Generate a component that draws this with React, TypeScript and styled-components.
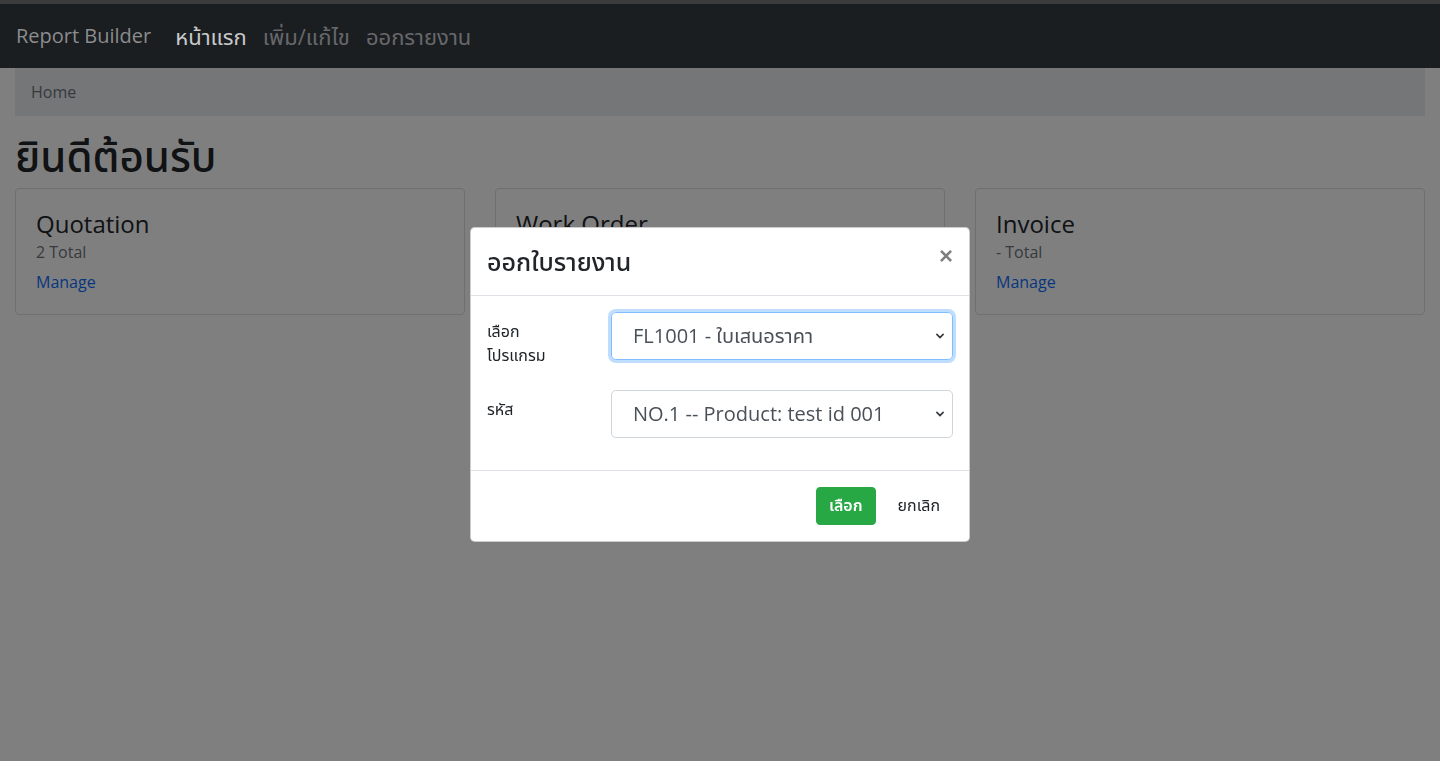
import React from 'react';
import styled, { createGlobalStyle } from 'styled-components';

const GlobalStyle = createGlobalStyle`
  * { box-sizing: border-box; }
  html, body { margin: 0; padding: 0; background: #fff; }
  body {
    font-family: "Open Sans", "Noto Sans Thai", "Noto Sans", sans-serif;
    font-size: 16px;
    line-height: 1.5;
    color: #212529;
    overflow: hidden;
  }
`;

const Nav = styled.nav`
  position: relative;
  z-index: 1060;
  height: 68px;
  border-top: 4px solid #3a3b3d;
  background: #1b1e21;
  display: flex;
  align-items: center;
  padding: 0 16px;
  gap: 24px;
`;

const Brand = styled.span`
  font-size: 20px;
  color: #8b8c8e;
`;

const NavLinks = styled.div`
  display: flex;
  gap: 16px;
`;

const NavLink = styled.span<{ $active?: boolean }>`
  font-size: 22px;
  font-weight: 400;
  color: ${(p) => (p.$active ? '#c8c9ca' : '#66686b')};
`;

const Page = styled.main`
  padding: 0 15px;
`;

const Breadcrumb = styled.div`
  background: #e9ecef;
  padding: 12px 16px;
  color: #6c757d;
  margin-bottom: 16px;
`;

const Heading = styled.h1`
  margin: 0 0 8px;
  font-size: 42px;
  font-weight: 500;
  line-height: 48px;
`;

const CardGrid = styled.div`
  display: grid;
  grid-template-columns: repeat(3, 1fr);
  gap: 30px;
`;

const Card = styled.div`
  border: 1px solid rgba(0, 0, 0, 0.125);
  border-radius: 4px;
  padding: 20px;
  display: flex;
  flex-direction: column;
`;

const CardTitle = styled.div`
  font-size: 24px;
  line-height: 29px;
  margin-bottom: 2px;
`;

const CardCount = styled.div`
  color: #6c757d;
  margin-bottom: 6px;
`;

const CardLink = styled.a`
  color: #0d6efd;
  text-decoration: none;
`;

const Backdrop = styled.div`
  position: fixed;
  inset: 0;
  background: rgba(0, 0, 0, 0.5);
  z-index: 1040;
`;

const ModalLayer = styled.div`
  position: fixed;
  inset: 0;
  z-index: 1070;
  display: flex;
  justify-content: center;
  align-items: flex-start;
  padding-top: 227px;
`;

const Dialog = styled.div`
  width: 500px;
  background: #fff;
  border: 1px solid rgba(0, 0, 0, 0.2);
  border-radius: 4.8px;
  display: flex;
  flex-direction: column;
`;

const ModalHeader = styled.div`
  display: flex;
  align-items: center;
  justify-content: space-between;
  padding: 16px 8px 16px 16px;
  border-bottom: 1px solid #dee2e6;
  height: 68px;
`;

const ModalTitle = styled.h5`
  margin: 0;
  font-size: 25px;
  font-weight: 500;
  color: #212529;
`;

const CloseButton = styled.button`
  border: 0;
  background: transparent;
  padding: 0 8px;
  font-size: 24px;
  font-weight: 700;
  line-height: 1;
  color: #000;
  opacity: 0.5;
  font-family: "Liberation Sans", sans-serif;
  margin-top: -12px;
`;

const ModalBody = styled.div`
  padding: 16px 16px 32px;
  display: flex;
  flex-direction: column;
  gap: 16px;
`;

const FormRow = styled.div`
  display: grid;
  grid-template-columns: 95px 1fr;
  gap: 29px;
  align-items: start;
`;

const Label = styled.label`
  padding: 7px 0;
  max-width: 72px;
  font-size: 16px;
  line-height: 24px;
  color: #212529;
`;

const SelectBox = styled.div<{ $focused?: boolean }>`
  height: 48px;
  display: flex;
  align-items: center;
  justify-content: space-between;
  padding: 0 7px 0 21px;
  font-size: 20px;
  color: #495057;
  border: 1px solid ${(p) => (p.$focused ? '#80bdff' : '#ced4da')};
  border-radius: 4.8px;
  box-shadow: ${(p) => (p.$focused ? '0 0 0 3px rgba(0, 123, 255, 0.25)' : 'none')};
  white-space: nowrap;
`;

const ModalFooter = styled.div`
  display: flex;
  justify-content: flex-end;
  align-items: center;
  gap: 9px;
  padding: 16px;
  border-top: 1px solid #dee2e6;
`;

const Button = styled.button<{ $variant?: 'success' | 'plain' }>`
  height: 38px;
  padding: 0 12px;
  border-radius: 4px;
  border: 1px solid ${(p) => (p.$variant === 'success' ? '#28a745' : 'transparent')};
  background: ${(p) => (p.$variant === 'success' ? '#28a745' : 'transparent')};
  color: ${(p) => (p.$variant === 'success' ? '#fff' : '#212529')};
  font-family: inherit;
  font-size: 16px;
  font-weight: ${(p) => (p.$variant === 'success' ? 600 : 400)};
`;

const Chevron = () => (
  <svg width="10" height="10" viewBox="0 0 16 16" fill="none">
    <path d="M3 5.5l5 5 5-5" stroke="#343a40" strokeWidth="2.6" strokeLinecap="round" strokeLinejoin="round" />
  </svg>
);

const cards = [
  { title: 'Quotation', total: '2 Total' },
  { title: 'Work Order', total: '- Total' },
  { title: 'Invoice', total: '- Total' },
];

export default function App(): JSX.Element {
  return (
    <>
      <GlobalStyle />
      <Nav>
        <Brand>Report Builder</Brand>
        <NavLinks>
          <NavLink $active>หน้าแรก</NavLink>
          <NavLink>เพิ่ม/แก้ไข</NavLink>
          <NavLink>ออกรายงาน</NavLink>
        </NavLinks>
      </Nav>
      <Page>
        <Breadcrumb>Home</Breadcrumb>
        <Heading>ยินดีต้อนรับ</Heading>
        <CardGrid>
          {cards.map((c) => (
            <Card key={c.title}>
              <CardTitle>{c.title}</CardTitle>
              <CardCount>{c.total}</CardCount>
              <CardLink href="#">Manage</CardLink>
            </Card>
          ))}
        </CardGrid>
      </Page>
      <Backdrop />
      <ModalLayer>
        <Dialog>
          <ModalHeader>
            <ModalTitle>ออกใบรายงาน</ModalTitle>
            <CloseButton>×</CloseButton>
          </ModalHeader>
          <ModalBody>
            <FormRow>
              <Label>เลือก โปรแกรม</Label>
              <SelectBox $focused>
                <span>FL1001 - ใบเสนอราคา</span>
                <Chevron />
              </SelectBox>
            </FormRow>
            <FormRow>
              <Label>รหัส</Label>
              <SelectBox>
                <span>NO.1 -- Product: test id 001</span>
                <Chevron />
              </SelectBox>
            </FormRow>
          </ModalBody>
          <ModalFooter>
            <Button $variant="success">เลือก</Button>
            <Button $variant="plain">ยกเลิก</Button>
          </ModalFooter>
        </Dialog>
      </ModalLayer>
    </>
  );
}
